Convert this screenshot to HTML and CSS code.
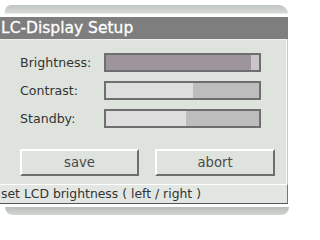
FILE: index.html
```html
<!DOCTYPE html>
<html>
<head>
<meta charset="utf-8">
<link rel="stylesheet" href="styles.css">
</head>
<body>
<div class="window">
  <div class="topbar"></div>
  <div class="title">LC-Display Setup</div>
  <div class="content">
    <div class="rows">
      <div class="row">
        <span class="label">Brightness:</span>
        <div class="bar focus"><div class="fill" style="width:95%"></div></div>
      </div>
      <div class="row">
        <span class="label">Contrast:</span>
        <div class="bar"><div class="fill" style="width:57%"></div></div>
      </div>
      <div class="row">
        <span class="label">Standby:</span>
        <div class="bar"><div class="fill" style="width:52%"></div></div>
      </div>
    </div>
    <div class="buttons">
      <div class="btn save">save</div>
      <div class="btn abort">abort</div>
    </div>
  </div>
  <div class="status">set LCD brightness ( left / right )</div>
  <div class="bottombar"></div>
</div>
</body>
</html>
```
FILE: styles.css
```css
html, body {
  margin: 0;
  padding: 0;
  background: #ffffff;
}
body {
  width: 301px;
  height: 225px;
  overflow: hidden;
  font-family: "DejaVu Sans", sans-serif;
}
.window {
  width: 288px;
  display: flex;
  flex-direction: column;
  padding-top: 5px;
}
.topbar {
  margin-left: 5px;
  height: 8px;
  border-radius: 8px 12px 0 0;
  background: linear-gradient(#c2c6c2, #d6dad6);
  border-bottom: 1px solid #e8ebe8;
}
.title {
  margin-top: 3px;
  height: 22px;
  background: #7e7e7e;
  color: #ffffff;
  font-size: 15.5px;
  line-height: 22px;
  padding-left: 1px;
  white-space: nowrap;
  -webkit-text-stroke: 0.3px #ffffff;
}
.content {
  background: #dee3de;
  border-top: 1px solid #eef0ee;
  border-right: 1px solid #f6f7f6;
  box-shadow: 1px 0 0 #c9ccc9;
  width: 287px;
  padding-top: 13px;
  padding-bottom: 8px;
  box-sizing: border-box;
}
.rows {
  display: flex;
  flex-direction: column;
  gap: 9px;
}
.row {
  display: flex;
  align-items: center;
  height: 19px;
}
.label {
  width: 84px;
  padding-left: 20px;
  font-size: 12.6px;
  color: #333333;
}
.bar {
  width: 157px;
  height: 19px;
  box-sizing: border-box;
  border: 2px solid #6e6e6e;
  background: #bdbdbd;
  display: flex;
}
.bar .fill {
  height: 100%;
  background: #dedede;
}
.bar.focus {
  background: #c9c5c9;
}
.bar.focus .fill {
  background: #9d959b;
}
.buttons {
  display: flex;
  gap: 16px;
  padding-left: 20px;
  margin-top: 21px;
}
.btn {
  height: 27px;
  box-sizing: border-box;
  border-top: 2px solid #ffffff;
  border-left: 2px solid #ffffff;
  border-right: 2px solid #6e6e6e;
  border-bottom: 2px solid #6e6e6e;
  display: flex;
  align-items: center;
  justify-content: center;
  font-size: 13.2px;
  color: #4a4a4a;
}
.save { width: 119px; }
.abort { width: 120px; }
.status {
  height: 20px;
  box-sizing: border-box;
  background: #e3e7e3;
  border-top: 1px solid #ffffff;
  border-bottom: 1px solid #555555;
  border-right: 1px solid #777777;
  font-size: 12.4px;
  color: #333333;
  line-height: 18px;
  padding-left: 1px;
  white-space: nowrap;
}
.bottombar {
  margin-top: 3px;
  margin-left: 5px;
  width: 284px;
  height: 8px;
  border-radius: 0 0 8px 8px;
  background: linear-gradient(#b9bdb9, #d2d6d2);
}
```
